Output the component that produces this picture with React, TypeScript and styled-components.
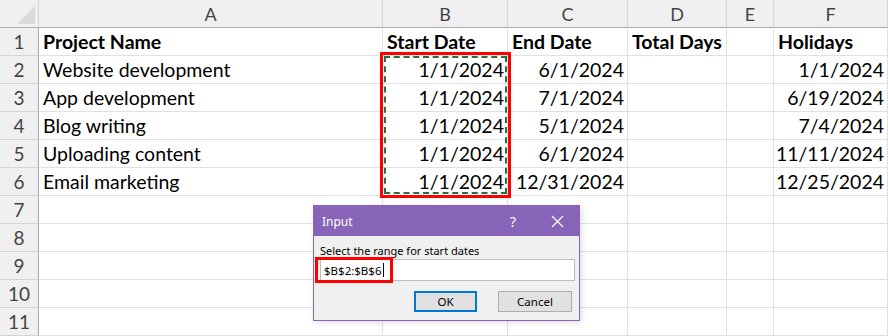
import React from 'react';
import styled, { createGlobalStyle } from 'styled-components';

const GlobalStyle = createGlobalStyle`
  html, body {
    margin: 0;
    padding: 0;
    background: #ffffff;
  }
  body {
    font-family: Lato, 'Liberation Sans', sans-serif;
  }
`;

const Sheet = styled.div`
  position: relative;
  width: 888px;
  height: 336px;
  overflow: hidden;
  background: #ffffff;
`;

const Grid = styled.div`
  display: grid;
  grid-template-columns: 39px 344px 125px 120px 99px 47px 114px;
  grid-auto-rows: 28px;
`;

const Corner = styled.div`
  position: relative;
  background: #f0f0f0;
  border-right: 1px solid #d4d4d4;
  border-bottom: 1px solid #a9a9a9;
  &::after {
    content: '';
    position: absolute;
    right: 3px;
    bottom: 3px;
    width: 0;
    height: 0;
    border-left: 18px solid transparent;
    border-bottom: 18px solid #dadada;
  }
`;

const ColHead = styled.div`
  display: flex;
  align-items: center;
  justify-content: center;
  background: #f0f0f0;
  border-right: 1px solid #d4d4d4;
  border-bottom: 1px solid #a9a9a9;
  color: #444444;
  font-size: 18px;
`;

const RowHead = styled.div`
  display: flex;
  align-items: center;
  justify-content: center;
  background: #f0f0f0;
  border-right: 1px solid #a9a9a9;
  border-bottom: 1px solid #d4d4d4;
  color: #444444;
  font-size: 19px;
`;

const Cell = styled.div<{ $right?: boolean; $bold?: boolean }>`
  display: flex;
  align-items: flex-end;
  justify-content: ${(p) => (p.$right ? 'flex-end' : 'flex-start')};
  padding: 0 3px 2px 4px;
  border-right: 1px solid #e1e1e1;
  border-bottom: 1px solid #e1e1e1;
  color: #000000;
  font-size: 19.5px;
  font-weight: ${(p) => (p.$bold ? 700 : 400)};
  white-space: nowrap;
  overflow: visible;
`;

const Marquee = styled.div`
  position: absolute;
  left: 380px;
  top: 52px;
  width: 125px;
  height: 140px;
  border: 3px solid #ff0000;
  pointer-events: none;
  &::after {
    content: '';
    position: absolute;
    left: 1px;
    top: 1px;
    right: 1px;
    bottom: 1px;
    border: 2px dashed #217346;
  }
`;

const Dialog = styled.div`
  position: absolute;
  left: 313px;
  top: 205px;
  width: 265px;
  height: 114px;
  border: 1px solid #8764b8;
  background: #f0f0f0;
  display: flex;
  flex-direction: column;
  font-family: 'Noto Sans', 'Open Sans', sans-serif;
  box-shadow: 2px 2px 6px rgba(0, 0, 0, 0.12);
`;

const TitleBar = styled.div`
  height: 30px;
  background: #8764b8;
  display: flex;
  align-items: center;
  padding-left: 8px;
  color: #ffffff;
  font-size: 12px;
`;

const TitleText = styled.span`
  flex: 1;
`;

const TitleButton = styled.span`
  width: 44px;
  display: flex;
  align-items: center;
  justify-content: center;
  color: #ffffff;
  font-size: 14px;
`;

const Body = styled.div`
  padding: 4px 6px 0 6px;
  display: flex;
  flex-direction: column;
`;

const Prompt = styled.div`
  font-size: 11px;
  color: #000000;
  margin-top: 3px;
  height: 16px;
  line-height: 16px;
`;

const InputWrap = styled.div`
  position: relative;
  height: 20px;
  width: 250px;
  border: 1px solid #bdbdbd;
  background: #ffffff;
  display: flex;
  align-items: center;
  padding-left: 3px;
  font-size: 11.5px;
  color: #000000;
`;

const Caret = styled.span`
  display: inline-block;
  width: 1px;
  height: 14px;
  background: #000000;
  margin-left: 1px;
`;

const Highlight = styled.div`
  position: absolute;
  left: -6px;
  top: -3px;
  width: 72px;
  height: 20px;
  border: 3px solid #ff0000;
`;

const Buttons = styled.div`
  display: flex;
  justify-content: flex-end;
  gap: 21px;
  margin-top: 10px;
  padding-right: 1px;
`;

const Button = styled.button<{ $primary?: boolean }>`
  width: ${(p) => (p.$primary ? '63px' : '74px')};
  height: 21px;
  padding: 0;
  background: #e1e1e1;
  border: ${(p) => (p.$primary ? '2px solid #0078d7' : '1px solid #adadad')};
  font-family: 'Noto Sans', 'Open Sans', sans-serif;
  font-size: 11.5px;
  color: #000000;
`;

const columns = ['A', 'B', 'C', 'D', 'E', 'F'];

const rows: { a: string; b: string; c: string; f: string }[] = [
  { a: 'Website development', b: '1/1/2024', c: '6/1/2024', f: '1/1/2024' },
  { a: 'App development', b: '1/1/2024', c: '7/1/2024', f: '6/19/2024' },
  { a: 'Blog writing', b: '1/1/2024', c: '5/1/2024', f: '7/4/2024' },
  { a: 'Uploading content', b: '1/1/2024', c: '6/1/2024', f: '11/11/2024' },
  { a: 'Email marketing', b: '1/1/2024', c: '12/31/2024', f: '12/25/2024' },
];

const App = () => {
  return (
    <Sheet>
      <GlobalStyle />
      <Grid>
        <Corner />
        {columns.map((c) => (
          <ColHead key={c}>{c}</ColHead>
        ))}

        <RowHead>1</RowHead>
        <Cell $bold>Project Name</Cell>
        <Cell $bold>Start Date</Cell>
        <Cell $bold>End Date</Cell>
        <Cell $bold>Total Days</Cell>
        <Cell />
        <Cell $bold>Holidays</Cell>

        {rows.map((r, i) => (
          <React.Fragment key={r.a}>
            <RowHead>{i + 2}</RowHead>
            <Cell>{r.a}</Cell>
            <Cell $right>{r.b}</Cell>
            <Cell $right>{r.c}</Cell>
            <Cell />
            <Cell />
            <Cell $right>{r.f}</Cell>
          </React.Fragment>
        ))}

        {[7, 8, 9, 10, 11].map((n) => (
          <React.Fragment key={n}>
            <RowHead>{n}</RowHead>
            <Cell />
            <Cell />
            <Cell />
            <Cell />
            <Cell />
            <Cell />
          </React.Fragment>
        ))}
      </Grid>

      <Marquee />

      <Dialog>
        <TitleBar>
          <TitleText>Input</TitleText>
          <TitleButton>?</TitleButton>
          <TitleButton>
            <svg width="13" height="13" viewBox="0 0 13 13">
              <path d="M1 1 L12 12 M12 1 L1 12" stroke="#ffffff" strokeWidth="1.2" fill="none" />
            </svg>
          </TitleButton>
        </TitleBar>
        <Body>
          <Prompt>Select the range for start dates</Prompt>
          <InputWrap>
            <span>$B$2:$B$6</span>
            <Caret />
            <Highlight />
          </InputWrap>
          <Buttons>
            <Button $primary>OK</Button>
            <Button>Cancel</Button>
          </Buttons>
        </Body>
      </Dialog>
    </Sheet>
  );
};

export default App;
